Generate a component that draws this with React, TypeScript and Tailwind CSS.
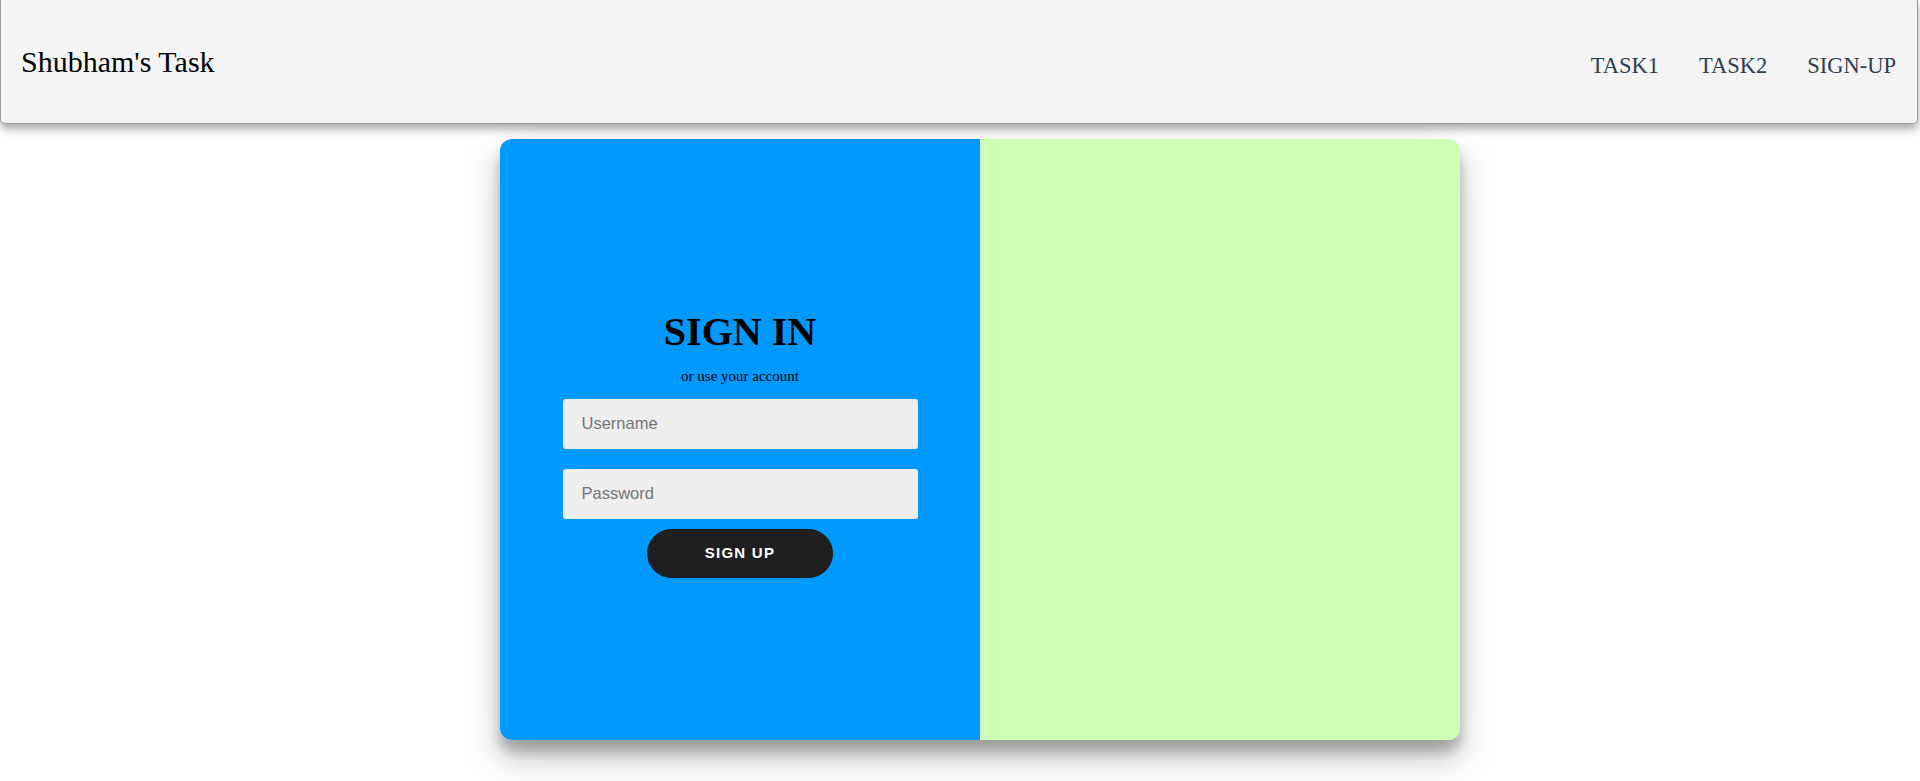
import React from "react";

export default function App() {
  return (
    <div className="min-h-[781px] bg-white">
      <header className="flex h-[124px] w-[1918px] items-center justify-between rounded-b-[5px] border-x border-b border-[#9a9a9a] bg-[#f4f4f4] pl-[20px] pr-[21px] shadow-[0_5px_10px_rgba(0,0,0,0.35)]">
        <div className="text-[30px] leading-[34px] text-black [font-family:'Liberation_Serif',serif]">
          Shubham's Task
        </div>
        <nav className="mt-[8px] flex gap-[40px] text-[22.5px] leading-[26px] text-[#2c3e50] [font-family:'Liberation_Serif',serif]">
          <a href="#">TASK1</a>
          <a href="#">TASK2</a>
          <a href="#">SIGN-UP</a>
        </nav>
      </header>
      <div className="ml-[500px] mt-[15px] flex h-[601px] w-[960px] overflow-hidden rounded-[12px] shadow-[0_17px_35px_rgba(0,0,0,0.25),0_12px_12px_rgba(0,0,0,0.22)]">
        <form className="flex w-[480px] flex-col items-center justify-center bg-[#0099ff] px-[63px] pt-[7px] text-center">
          <h1 className="m-0 text-[40px] font-bold leading-[46px] text-black [font-family:'Liberation_Serif',serif]">
            SIGN IN
          </h1>
          <span className="mt-[13px] block text-[15px] leading-[17px] text-black [font-family:'Liberation_Serif',serif]">
            or use your account
          </span>
          <input
            type="text"
            placeholder="Username"
            className="mt-[14px] h-[50px] w-[355px] rounded-[3px] border-0 bg-[#eeeeee] px-[19px] text-[16.5px] text-black outline-none placeholder:text-[#757575] [font-family:'Liberation_Sans',Arial,sans-serif]"
          />
          <input
            type="password"
            placeholder="Password"
            className="mt-[20px] h-[50px] w-[355px] rounded-[3px] border-0 bg-[#eeeeee] px-[19px] text-[16.5px] text-black outline-none placeholder:text-[#757575] [font-family:'Liberation_Sans',Arial,sans-serif]"
          />
          <button
            type="button"
            className="mt-[10px] h-[49px] w-[186px] rounded-full border border-[#1a1a1a] bg-[#1f1f1f] text-[15px] font-bold uppercase tracking-[1.25px] text-white [font-family:'Liberation_Sans',Arial,sans-serif]"
          >
            Sign Up
          </button>
        </form>
        <div className="w-[480px] bg-[#ccffb3]" />
      </div>
    </div>
  );
}
